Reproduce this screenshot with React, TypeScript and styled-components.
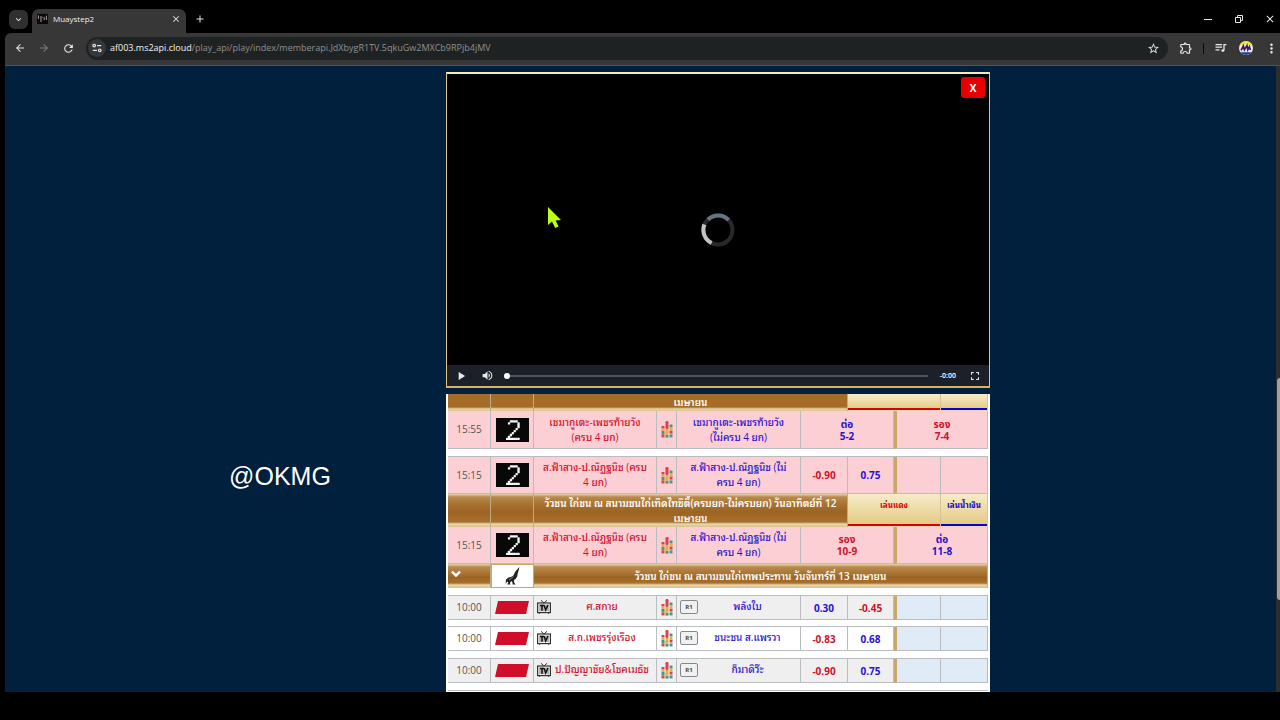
import React from "react";
import styled, { createGlobalStyle } from "styled-components";
import {
  MdAdd, MdArrowBack, MdArrowForward, MdClose, MdExpandMore, MdFullscreen, MdMoreVert,
  MdOutlineExtension, MdPlayArrow, MdRefresh, MdStarBorder, MdVolumeUp,
} from "react-icons/md";

const RED = "#d0102c";
const BLUE = "#2a10d0";
const SANS = `"Open Sans", "Noto Sans", "Noto Sans Thai", "Liberation Sans", sans-serif`;
const LOOPED = `"Open Sans", "Noto Sans Thai Looped", "Loma", sans-serif`;

const GlobalStyle = createGlobalStyle`
  *, *::before, *::after { box-sizing: border-box; }
  body { margin: 0; background: #000; font-family: ${SANS}; }
  button { font: inherit; color: inherit; background: none; border: 0; padding: 0; margin: 0; }
`;

const Screen = styled.div`
  position: relative;
  display: flex;
  flex-direction: column;
  height: 100vh;
  padding: 0 0 28px 5px;
  overflow: hidden;
  background: #000;
`;

/* browser window */
const TitleBar = styled.header`
  display: flex;
  align-items: flex-end;
  height: 33px;
  padding-left: 4px;
  color: #eee;
`;
const TabSearch = styled.button`
  display: grid;
  place-items: center;
  width: 19px;
  height: 19px;
  margin: 0 4px 4px 0;
  border-radius: 6px;
  background: #303030;
`;
const Tab = styled.div`
  display: flex;
  align-items: center;
  gap: 5px;
  width: 154px;
  height: 24px;
  padding: 0 5px 4px;
  border-radius: 7px 7px 0 0;
  background: #373737;
  font-size: 8px;
  font-weight: 500;
  line-height: 12px;
`;
const TabTitle = styled.span`
  flex: 1;
`;
const IconButton = styled.button<{ $size?: number; $dim?: boolean }>`
  display: grid;
  place-items: center;
  flex: none;
  width: ${(p) => p.$size ?? 16}px;
  height: ${(p) => p.$size ?? 16}px;
  color: ${(p) => (p.$dim ? "#7d7d7d" : "#e8e8e8")};
`;
const NewTab = styled(IconButton)`
  margin: 0 0 6px 6px;
`;
const WindowButtons = styled.div`
  display: flex;
  gap: 15px;
  margin: 0 2px 6px auto;
`;
const Toolbar = styled.nav`
  display: flex;
  align-items: center;
  height: 33px;
  padding: 0 1px 2px 7px;
  border-bottom: 1px solid #525458;
  border-radius: 6px 0 0 0;
  background: #373737;
`;
const NavGroup = styled.div`
  display: flex;
  gap: 8px;
  margin-right: 10px;
`;
const AddressBar = styled.div`
  display: flex;
  align-items: center;
  flex: 1;
  gap: 4px;
  height: 23px;
  padding: 0 7px 0 2px;
  border-radius: 12px;
  background: #1f2223;
  font-size: 9px;
  line-height: 14px;
  color: #8e9091;
`;
const SiteInfo = styled.button`
  display: grid;
  place-items: center;
  width: 18px;
  height: 18px;
  border-radius: 9px;
  background: #35383a;
`;
const Address = styled.span`
  flex: 1;
  b { font-weight: 500; color: #f2f2f2; }
`;
const ToolGroup = styled.div`
  display: flex;
  align-items: center;
  gap: 9px;
  padding-left: 10px;
`;
const Separator = styled.span`
  width: 1px;
  height: 11px;
  background: #0a0a0a;
`;

/* page */
const Page = styled.main`
  display: flex;
  flex: 1;
  min-height: 0;
  background: #00203d;
`;
const Columns = styled.div`
  display: grid;
  grid-template-columns: 441fr 544px 286fr;
  flex: 1;
  min-height: 0;
`;
const Side = styled.aside`
  display: flex;
  justify-content: center;
  align-items: flex-start;
  padding: 395px 0 0 109px;
  font: 25px/30px "Liberation Sans", Arial, sans-serif;
  color: #fff;
`;
const Content = styled.section`
  display: flex;
  flex-direction: column;
  gap: 6px;
  min-height: 0;
  padding-top: 6px;
`;
const ScrollTrack = styled.div`
  display: flex;
  flex-direction: column;
  width: 4px;
  padding-left: 1px;
  background: #2d2d2f;
`;
const ScrollGap = styled.div<{ $grow: number }>`
  flex: ${(p) => p.$grow};
`;
const ScrollThumb = styled.div`
  flex: 222;
  border-radius: 3px 0 0 3px;
  background: #a29ea2;
`;

/* player */
const Player = styled.div`
  display: flex;
  flex-direction: column;
  flex: none;
  height: 316px;
  border: 2px solid;
  border-width: 2px 1px;
  border-color: #f3eeb4 #e0c47c #d8b163 #e0c47c;
  background: #000;
`;
const Stage = styled.div`
  display: grid;
  grid-template-columns: 1fr auto 1fr;
  align-items: center;
  flex: 1;
  padding: 3px 4px 0;
`;
const CloseButton = styled.button`
  grid-area: 1 / 3;
  justify-self: end;
  align-self: start;
  width: 24px;
  height: 21px;
  border-radius: 3px;
  background: #e60000;
  color: #fff;
  font-size: 10px;
  font-weight: 700;
  line-height: 20px;
`;
const Spinner = styled.svg`
  grid-area: 1 / 2;
  margin-top: 18px;
`;
const Controls = styled.div`
  display: flex;
  align-items: center;
  height: 21px;
  padding: 0 6px;
  background: #1c2129;
  color: #fff;
`;
const Seek = styled.input`
  appearance: none;
  flex: 1;
  height: 8px;
  margin: 0 12px 0 9px;
  background: linear-gradient(#50545b, #50545b) center / 100% 2px no-repeat;
  &::-webkit-slider-thumb {
    appearance: none;
    width: 6px;
    height: 6px;
    border-radius: 3px;
    background: #fff;
  }
`;
const Volume = styled(IconButton)`
  margin-left: 10px;
`;
const TimeLeft = styled.span`
  margin-right: 11px;
  font-size: 7px;
  font-weight: 600;
  line-height: 10px;
`;

/* odds table */
const Board = styled.div`
  flex: 1;
  min-height: 0;
  overflow: hidden;
  padding: 0 2px;
  background: #fff;
`;
const Table = styled.table`
  width: 100%;
  table-layout: fixed;
  border-collapse: separate;
  border-spacing: 0;
  font-size: 10px;
  line-height: 15px;
`;
const Row = styled.tr<{ $h: number; $bg?: string }>`
  height: ${(p) => p.$h}px;
  background: ${(p) => p.$bg ?? "#fff"};
`;
const Cell = styled.td<{ $gold?: boolean; $bg?: string }>`
  padding: 0;
  border-right: 1px solid #b9bcc0;
  border-bottom: 1px solid #b9bcc0;
  border-left: ${(p) => (p.$gold ? "3px solid #c9a76a" : "0")};
  background: ${(p) => p.$bg ?? "transparent"};
  text-align: center;
  vertical-align: middle;
  svg { display: block; margin: 0 auto; }
`;
const Time = styled(Cell)`
  color: #555;
`;
const Gap = styled.td`
  padding: 0;
  border-bottom: 1px solid #b9bcc0;
`;
const Name = styled.div<{ $color: string }>`
  display: flex;
  align-items: center;
  padding: 0 3px;
  color: ${(p) => p.$color};
  font-family: ${LOOPED};
  font-weight: 500;
  white-space: pre-line;
  span { flex: 1; }
  svg { flex: none; margin: 0; }
`;
const Fighter = styled(Name)`
  padding: 0 3px 2px;
`;
const Odd = styled.button<{ $color: string }>`
  display: block;
  width: 100%;
  color: ${(p) => p.$color};
  font-weight: 700;
  line-height: 12px;
`;
const Head = styled.th`
  padding: 0 10px;
  border-right: 1px solid #c0ac88;
  background: linear-gradient(#e6d5b4 0, #b98a4c 3px, #a87232 10px, #9c6422 55%, #a8702c calc(100% - 5px), #e9d9b0 calc(100% - 3px), #d8bf8c 100%);
  color: #fff;
  font-family: ${LOOPED};
  font-weight: 600;
  svg { display: block; }
`;
const CutHead = styled(Head)`
  background: linear-gradient(#a56c28 0, #a56c28 calc(100% - 4px), #e9d9b0 calc(100% - 2px), #d8bf8c 100%);
`;
const CornerHead = styled.th<{ $color: string }>`
  padding: 0 0 10px;
  border-right: 1px solid #d2c39b;
  border-bottom: 1px solid #e6d8bc;
  background: linear-gradient(#f7ecc9, #e2c880);
  box-shadow: inset 0 -2px ${(p) => p.$color};
  color: ${(p) => p.$color};
  font-family: ${LOOPED};
  font-size: 8px;
  font-weight: 700;
  line-height: 12px;
  white-space: nowrap;
`;
const Round = styled.button`
  width: 18px;
  height: 14px;
  border: 1px solid #85888a;
  border-radius: 2px;
  background: #f1f1f1;
  color: #444;
  font-family: ${SANS};
  font-size: 6px;
  font-weight: 700;
  line-height: 12px;
`;
const LogoHead = styled(Head)`
  padding: 0;
  border: 1px solid #c9a76a;
  background: #fff;
  svg { margin: 0 auto; }
`;
const ToggleHead = styled(Head)`
  padding: 0 3px 4px;
`;
const PointerIcon = styled.svg`
  position: absolute;
  left: 547px;
  top: 206px;
`;

const TWO = [
  "0011110",
  "0100001",
  "0000001",
  "0000001",
  "0000010",
  "0000100",
  "0001000",
  "0010000",
  "0100000",
  "1111111",
];

const DotTwo = () => (
  <svg width="33" height="24" viewBox="0 0 33 24" role="img" aria-label="2">
    <rect width="33" height="24" fill="#070807" />
    {TWO.map((line, y) =>
      [...line].map((c, x) =>
        c === "1" ? <rect key={`${x}-${y}`} x={10 + x * 1.9} y={2.2 + y * 1.95} width="2.3" height="2.3" rx=".5" fill="#f4f8f6" /> : null
      )
    )}
  </svg>
);

const Bars = () => (
  <svg width="12" height="17" viewBox="0 0 12 17">
    <g fill="#d9434b">
      <rect x="4.5" y="0" width="3" height="8" rx="1.2" />
      <rect x=".5" y="5" width="3" height="2.6" rx=".6" />
      <rect x="8.6" y="9.6" width="2.9" height="3" />
      <rect x=".5" y="13.4" width="3" height="3" />
    </g>
    <g fill="#3f9a8c">
      <rect x=".5" y="9.8" width="3" height="3.4" />
      <rect x="8.6" y="3.6" width="2.9" height="3" rx=".6" />
      <rect x="4.5" y="13.8" width="3" height="2.8" />
      <rect x="8.6" y="13.4" width="2.9" height="3" />
    </g>
    <g fill="#e3ab4a">
      <rect x="4.5" y="8" width="3" height="5.6" />
      <rect x="8.6" y="6.8" width="2.9" height="2.8" />
      <rect x=".5" y="7.6" width="3" height="2.2" />
      <rect x="3.5" y="11" width="1" height="5.4" />
    </g>
  </svg>
);

const Flag = () => (
  <svg width="34" height="13" viewBox="0 0 34 13"><path d="M3 0H34L31 13H0Z" fill="#d00e2b" /></svg>
);

const TvIcon = () => (
  <svg width="14" height="14" viewBox="0 0 14 14" fill="none" stroke="#333">
    <path d="M4 .3 7 3 10 .3" />
    <rect x=".6" y="3" width="12.8" height="9.6" strokeWidth="1.2" />
    <rect x="2" y="4.4" width="10" height="6.8" fill="#b4b4b4" stroke="none" />
    <path d="M3 5.4h4M5 5.4v5.4M7.2 5.2l1.5 4.8L11 5" stroke="#111" strokeWidth="1.5" />
    <path d="M2.4 12.6v1.2M11.6 12.6v1.2" />
  </svg>
);

const Rooster = () => (
  <svg width="40" height="19" viewBox="0 0 40 19" fill="#222">
    <path d="M26.4 0 25.8 3 24.8 6 24.2 9.5 22.6 12 21 13 21.2 15.8 22.5 17.4H19.8L19 14 17 15.6 17.2 17.4H14.4L15.2 15.2 14.2 14.4 12.6 17 13 12.6 15.6 10.6 18 10 20.4 8.6 22.4 4.6 24.6 2Z" />
    <path d="M16 13.2 20.5 9.4" stroke="#999" strokeWidth=".8" />
  </svg>
);

const Chevron = () => (
  <svg width="10" height="8" viewBox="0 0 10 8" fill="none" stroke="#fff" strokeWidth="2.4"><path d="M1 1.6 5 5.6 9 1.6" /></svg>
);

const TuneIcon = () => (
  <svg width="10" height="10" viewBox="0 0 10 10" fill="none" stroke="#e4e4e4" strokeWidth="1.2">
    <circle cx="2.2" cy="2.6" r="1.3" /><path d="M5 2.6h4.2M.8 7.3H5" /><circle cx="7.8" cy="7.3" r="1.3" />
  </svg>
);

const PlaylistIcon = () => (
  <svg width="12" height="10" viewBox="0 0 12 10" fill="none" stroke="#e8e8e8" strokeWidth="1.3">
    <path d="M.5 1.6h6.6M.5 4.2h6.6M.5 6.8h4M9 7.4V1.6h2.4" />
    <circle cx="7.8" cy="7.6" r="1.4" fill="#e8e8e8" stroke="none" />
  </svg>
);

const Avatar = () => (
  <svg width="14" height="14" viewBox="0 0 14 14">
    <circle cx="7" cy="7" r="7" fill="#ece9ee" />
    <path d="M.6 4.6A7 7 0 0 1 13.4 4.6L10 4 7 3 4 4Z" fill="#f0e23a" />
    <path d="M1.4 11.2A7 7 0 0 0 12.6 11.2Z" fill="#1c3f9c" />
    <path d="M2 9.4 4.4 4.8 5.4 9 8 4.6 8.8 8.8 10.4 5.6 11.4 9" fill="none" stroke="#421466" strokeWidth="1.6" />
  </svg>
);

const Favicon = () => (
  <svg width="11" height="10" viewBox="0 0 11 10">
    <rect width="11" height="10" fill="#080808" />
    <path d="M1.4 1.4V5M4 2v6M7.2 3.4V6M9.4 1.6V6" stroke="#a9a3a3" />
    <path d="M3 3.4H8" stroke="#b3303b" />
  </svg>
);

const Restore = () => (
  <svg width="8" height="8" viewBox="0 0 8 8" fill="none" stroke="#e8e8e8"><path d="M.5 2.5h5v5h-5zM2.5 2.5v-2h5v5h-2" /></svg>
);

type Bet = [string, string];
type Pair = { time: string; red: string; blue: string; h: number; bets?: Bet[]; lines?: [string, string, string][] };

const colorOf = (k: string) => (k === "r" ? RED : BLUE);

const CityRow = ({ time, red, blue, h, bets, lines }: Pair) => (
  <Row $h={h} $bg="#fccfd4">
    <Time>{time}</Time>
    <Cell><DotTwo /></Cell>
    <Cell><Name $color={RED}><span>{red}</span></Name></Cell>
    <Cell><Bars /></Cell>
    <Cell><Name $color={BLUE}><span>{blue}</span></Name></Cell>
    {lines?.map(([a, b, k], i) => (
      <Cell key={a} colSpan={2} $gold={i === 1}><Odd $color={colorOf(k)}>{a}<br />{b}</Odd></Cell>
    ))}
    {bets?.map(([v, k]) => <Cell key={v}><Odd $color={colorOf(k)}>{v}</Odd></Cell>)}
    {bets && <><Cell $gold /><Cell /></>}
  </Row>
);

const CockRow = ({ red, blue, bets, bg }: { red: string; blue: string; bets: Bet[]; bg?: string }) => (
  <Row $h={24} $bg={bg}>
    <Time>10:00</Time>
    <Cell><Flag /></Cell>
    <Cell><Fighter $color={RED}><TvIcon /><span>{red}</span></Fighter></Cell>
    <Cell><Bars /></Cell>
    <Cell><Fighter $color={BLUE}><Round>R1</Round><span>{blue}</span></Fighter></Cell>
    {bets.map(([v, k]) => <Cell key={v}><Odd $color={colorOf(k)}>{v}</Odd></Cell>)}
    <Cell $gold $bg="#e0ebf8" />
    <Cell $bg="#e0ebf8" />
  </Row>
);

const Spacer = ({ h = 8 }: { h?: number }) => <Row $h={h}><Gap colSpan={9} /></Row>;

const WIDTHS = [43, 43, 123, 20, 124, 47, 46, 47, 47];

export default function App() {
  return (
    <Screen>
      <GlobalStyle />
      <TitleBar>
        <TabSearch aria-label="Search tabs"><MdExpandMore size={11} /></TabSearch>
        <Tab>
          <Favicon />
          <TabTitle>Muaystep2</TabTitle>
          <IconButton $size={11} aria-label="Close tab"><MdClose size={10} /></IconButton>
        </Tab>
        <NewTab aria-label="New tab"><MdAdd size={12} /></NewTab>
        <WindowButtons>
          <IconButton aria-label="Minimize"><svg width="8" height="2"><rect width="8" height="1" y="1" fill="#e8e8e8" /></svg></IconButton>
          <IconButton aria-label="Restore"><Restore /></IconButton>
          <IconButton aria-label="Close"><MdClose size={12} /></IconButton>
        </WindowButtons>
      </TitleBar>
      <Toolbar>
        <NavGroup>
          <IconButton aria-label="Back"><MdArrowBack size={12} /></IconButton>
          <IconButton $dim aria-label="Forward"><MdArrowForward size={12} /></IconButton>
          <IconButton aria-label="Reload"><MdRefresh size={13} /></IconButton>
        </NavGroup>
        <AddressBar>
          <SiteInfo aria-label="Site information"><TuneIcon /></SiteInfo>
          <Address><b>af003.ms2api.cloud</b>/play_api/play/index/memberapi.JdXbygR1TV.5qkuGw2MXCb9RPjb4jMV</Address>
          <IconButton aria-label="Bookmark"><MdStarBorder size={13} /></IconButton>
        </AddressBar>
        <ToolGroup>
          <IconButton aria-label="Extensions"><MdOutlineExtension size={14} /></IconButton>
          <Separator />
          <IconButton aria-label="Media"><PlaylistIcon /></IconButton>
          <IconButton aria-label="Profile"><Avatar /></IconButton>
          <IconButton aria-label="Menu"><MdMoreVert size={15} /></IconButton>
        </ToolGroup>
      </Toolbar>
      <Page>
        <Columns>
          <Side>@OKMG</Side>
          <Content>
            <Player>
              <Stage>
                <CloseButton>X</CloseButton>
                <Spinner width="34" height="34" viewBox="0 0 34 34" fill="none" strokeWidth="4">
                  <circle cx="17" cy="17" r="14.5" stroke="#29292b" />
                  <path d="M7 6.6A14.5 14.5 0 0 1 27.6 7" stroke="#667384" />
                  <path d="M3.4 11.6A14.5 14.5 0 0 0 10.6 30" stroke="#c4c4c6" />
                </Spinner>
              </Stage>
              <Controls>
                <IconButton aria-label="Play"><MdPlayArrow size={14} /></IconButton>
                <Volume aria-label="Mute"><MdVolumeUp size={13} /></Volume>
                <Seek type="range" min="0" max="100" defaultValue="0" aria-label="Seek" />
                <TimeLeft>-0:00</TimeLeft>
                <IconButton aria-label="Fullscreen"><MdFullscreen size={14} /></IconButton>
              </Controls>
            </Player>
            <Board>
              <Table>
                <colgroup>{WIDTHS.map((w, i) => <col key={i} style={{ width: w }} />)}</colgroup>
                <tbody>
                  <Row $h={17}>
                    <CutHead /><CutHead /><CutHead colSpan={4}>เมษายน</CutHead>
                    <CornerHead colSpan={2} $color="#d80000" /><CornerHead $color="#1000c8" />
                  </Row>
                  <CityRow time="15:55" h={38} red={"เชมากูเตะ-เพชรท้ายวัง\n(ครบ 4 ยก)"} blue={"เชมากูเตะ-เพชรท้ายวัง\n(ไม่ครบ 4 ยก)"}
                    lines={[["ต่อ", "5-2", "b"], ["รอง", "7-4", "r"]]} />
                  <Spacer />
                  <CityRow time="15:15" h={37} red={"ส.ฟ้าสาง-ป.ณัฏฐนิช (ครบ\n4 ยก)"} blue={"ส.ฟ้าสาง-ป.ณัฏฐนิช (ไม่\nครบ 4 ยก)"}
                    bets={[["-0.90", "r"], ["0.75", "b"]]} />
                  <Row $h={33}>
                    <Head /><Head />
                    <Head colSpan={4}>วัวชน ไก่ชน ณ สนามชนไก่เทิดไทซิตี้(ครบยก-ไม่ครบยก) วันอาทิตย์ที่ 12 เมษายน</Head>
                    <CornerHead colSpan={2} $color="#d80000">เล่นแดง</CornerHead><CornerHead $color="#1000c8">เล่นน้ำเงิน</CornerHead>
                  </Row>
                  <CityRow time="15:15" h={37} red={"ส.ฟ้าสาง-ป.ณัฏฐนิช (ครบ\n4 ยก)"} blue={"ส.ฟ้าสาง-ป.ณัฏฐนิช (ไม่\nครบ 4 ยก)"}
                    lines={[["รอง", "10-9", "r"], ["ต่อ", "11-8", "b"]]} />
                  <Row $h={24}>
                    <ToggleHead><Chevron /></ToggleHead>
                    <LogoHead><Rooster /></LogoHead>
                    <Head colSpan={7}>วัวชน ไก่ชน ณ สนามชนไก่เทพประทาน วันจันทร์ที่ 13 เมษายน</Head>
                  </Row>
                  <Spacer />
                  <CockRow red="ศ.สกาย" blue="พลังใบ" bets={[["0.30", "b"], ["-0.45", "r"]]} bg="#efefef" />
                  <Spacer h={7} />
                  <CockRow red="ส.ก.เพชรรุ่งเรือง" blue="ชนะชน ส.แพรวา" bets={[["-0.83", "r"], ["0.68", "b"]]} />
                  <Spacer />
                  <CockRow red="ป.ปัญญาชัย&โชคเมธัช" blue="ก็มาดิว๊ะ" bets={[["-0.90", "r"], ["0.75", "b"]]} bg="#efefef" />
                  <Spacer />
                </tbody>
              </Table>
            </Board>
          </Content>
        </Columns>
        <ScrollTrack>
          <ScrollGap $grow={312} />
          <ScrollThumb />
          <ScrollGap $grow={92} />
        </ScrollTrack>
      </Page>
      <PointerIcon width="15" height="23" viewBox="0 0 15 23"><path d="M1 1V19L5 15.6 8.2 22 11.6 20.6 8.6 14.4 14 14Z" fill="#b9ff16" /></PointerIcon>
    </Screen>
  );
}
